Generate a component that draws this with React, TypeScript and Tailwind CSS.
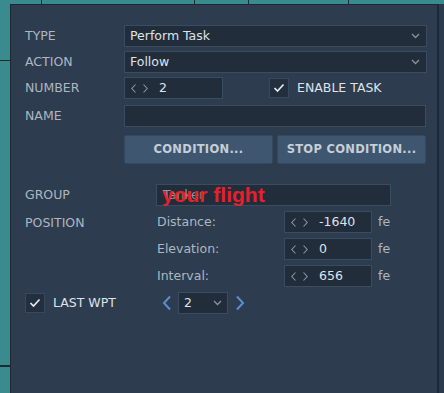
import React from 'react';

const font = { fontFamily: '"DejaVu Sans", Verdana, sans-serif' };

const Chevron: React.FC<{ className?: string }> = ({ className }) => (
  <svg width="9" height="6" viewBox="0 0 9 6" className={className}>
    <polyline points="1,1 4.5,4.5 8,1" fill="none" stroke="currentColor" strokeWidth="1.3" />
  </svg>
);

const Spin: React.FC = () => (
  <div className="flex items-center gap-[7px] text-[#8a96a3] ml-[6px] mr-[11px]">
    <svg width="5" height="9" viewBox="0 0 5 9">
      <polyline points="4.5,0.5 0.8,4.5 4.5,8.5" fill="none" stroke="currentColor" strokeWidth="1.1" />
    </svg>
    <svg width="5" height="9" viewBox="0 0 5 9">
      <polyline points="0.5,0.5 4.2,4.5 0.5,8.5" fill="none" stroke="currentColor" strokeWidth="1.1" />
    </svg>
  </div>
);

const Check: React.FC = () => (
  <div className="w-[20px] h-[20px] bg-[#232f3e] border border-[#38495c] flex items-center justify-center">
    <svg width="12" height="10" viewBox="0 0 12 10">
      <polyline points="1.5,5 4.5,8 10.5,1.5" fill="none" stroke="#e6eaee" strokeWidth="1.7" />
    </svg>
  </div>
);

const Select: React.FC<{ value: string }> = ({ value }) => (
  <div className="h-[22px] w-[303px] bg-[#222d3b] border border-[#3a4c60] flex items-center pl-[5px] pr-[6px] text-[#dfe3e8]">
    <span className="flex-1">{value}</span>
    <Chevron className="text-[#8893a0]" />
  </div>
);

const NumInput: React.FC<{ value: string; w: string }> = ({ value, w }) => (
  <div className={`h-[22px] ${w} bg-[#222d3b] border border-[#3a4c60] flex items-center text-[#dfe3e8]`}>
    <Spin />
    <span>{value}</span>
  </div>
);

const Label: React.FC<{ children: React.ReactNode; className?: string }> = ({ children, className }) => (
  <div className={`text-[#aeb7c1] ${className ?? ''}`}>{children}</div>
);

const App: React.FC = () => {
  const positions = [
    { label: 'Distance:', value: '-1640' },
    { label: 'Elevation:', value: '0' },
    { label: 'Interval:', value: '656' },
  ];

  return (
    <div className="relative w-[444px] h-[393px] overflow-hidden bg-[#3a8b8d] text-[12.5px] leading-none" style={font}>
      {/* desktop grid lines */}
      <div className="absolute left-[41px] top-0 w-px h-[5px] bg-[#1b2a36]" />
      <div className="absolute left-[194px] top-0 w-px h-[5px] bg-[#1b2a36]" />
      <div className="absolute left-[248px] top-0 w-px h-[5px] bg-[#1b2a36]" />
      <div className="absolute left-[348px] top-0 w-px h-[5px] bg-[#1b2a36]" />
      <div className="absolute left-0 top-[60px] w-[11px] h-px bg-[#1b2a36]" />
      <div className="absolute left-0 top-[365px] w-[11px] h-[2px] bg-[#1b2a36]" />

      <div className="absolute left-[10px] top-[4px] w-[434px] h-[389px] flex">
        <div className="w-[429px] h-full bg-[#2d3c4e] border-l border-t border-r-2 border-[#1c2836] pl-[14px] pt-[20px]">
          {/* task rows */}
          <div className="flex flex-col gap-[4px]">
            <div className="flex items-center">
              <Label className="w-[99px]">TYPE</Label>
              <Select value="Perform Task" />
            </div>
            <div className="flex items-center">
              <Label className="w-[99px]">ACTION</Label>
              <Select value="Follow" />
            </div>
            <div className="flex items-center">
              <Label className="w-[99px]">NUMBER</Label>
              <NumInput value="2" w="w-[99px]" />
              <div className="ml-[46px] flex items-center gap-[8px]">
                <Check />
                <span className="text-[#dfe3e8]">ENABLE TASK</span>
              </div>
            </div>
            <div className="flex items-center mt-[2px]">
              <Label className="w-[99px]">NAME</Label>
              <div className="h-[22px] w-[302px] bg-[#222d3b] border border-[#3a4c60]" />
            </div>
          </div>

          <div className="flex gap-[4px] ml-[99px] mt-[8px]">
            <button className="h-[29px] w-[149px] rounded-[2px] bg-[#3f5670] border border-[#34495f] text-[#c6ced8] font-bold text-[11.5px] tracking-[0.3px]">
              CONDITION...
            </button>
            <button className="h-[29px] w-[149px] rounded-[2px] bg-[#3f5670] border border-[#34495f] text-[#c6ced8] font-bold text-[11.5px] tracking-[0.3px]">
              STOP CONDITION...
            </button>
          </div>

          {/* group / position */}
          <div className="flex items-center mt-[20px]">
            <Label className="w-[131px]">GROUP</Label>
            <div className="relative h-[22px] w-[235px] bg-[#222d3b] border border-[#3a4c60] flex items-center pl-[6px] text-[#8d97a2]">
              Tanker
              <span
                className="absolute left-[5px] top-[-1px] text-[#e8202a] font-bold text-[21px] leading-[22px]"
                style={{ fontFamily: '"Liberation Sans", Arial, sans-serif' }}
              >
                your flight
              </span>
            </div>
          </div>

          <div className="flex mt-[5px]">
            <Label className="w-[132px] pt-[6px]">POSITION</Label>
            <div className="flex flex-col gap-[5px]">
              {positions.map((p) => (
                <div key={p.label} className="flex items-center">
                  <Label className="w-[127px]">{p.label}</Label>
                  <NumInput value={p.value} w="w-[88px]" />
                  <span className="ml-[6px] text-[#aeb7c1]">fe</span>
                </div>
              ))}
            </div>
          </div>

          <div className="flex items-center mt-[5px]">
            <Check />
            <span className="ml-[8px] w-[109px] text-[#dfe3e8]">LAST WPT</span>
            <svg width="10" height="16" viewBox="0 0 10 16" className="text-[#5a8ed0]">
              <polyline points="8,1.5 2,8 8,14.5" fill="none" stroke="currentColor" strokeWidth="2" />
            </svg>
            <div className="ml-[6px] h-[22px] w-[50px] bg-[#222d3b] border border-[#3a4c60] flex items-center pl-[5px] pr-[5px] text-[#dfe3e8]">
              <span className="flex-1">2</span>
              <Chevron className="text-[#8893a0]" />
            </div>
            <svg width="10" height="16" viewBox="0 0 10 16" className="ml-[7px] text-[#5a8ed0]">
              <polyline points="2,1.5 8,8 2,14.5" fill="none" stroke="currentColor" strokeWidth="2" />
            </svg>
          </div>
        </div>
        <div className="flex-1 h-full bg-[#2b3a4c]" />
      </div>
    </div>
  );
};

export default App;
